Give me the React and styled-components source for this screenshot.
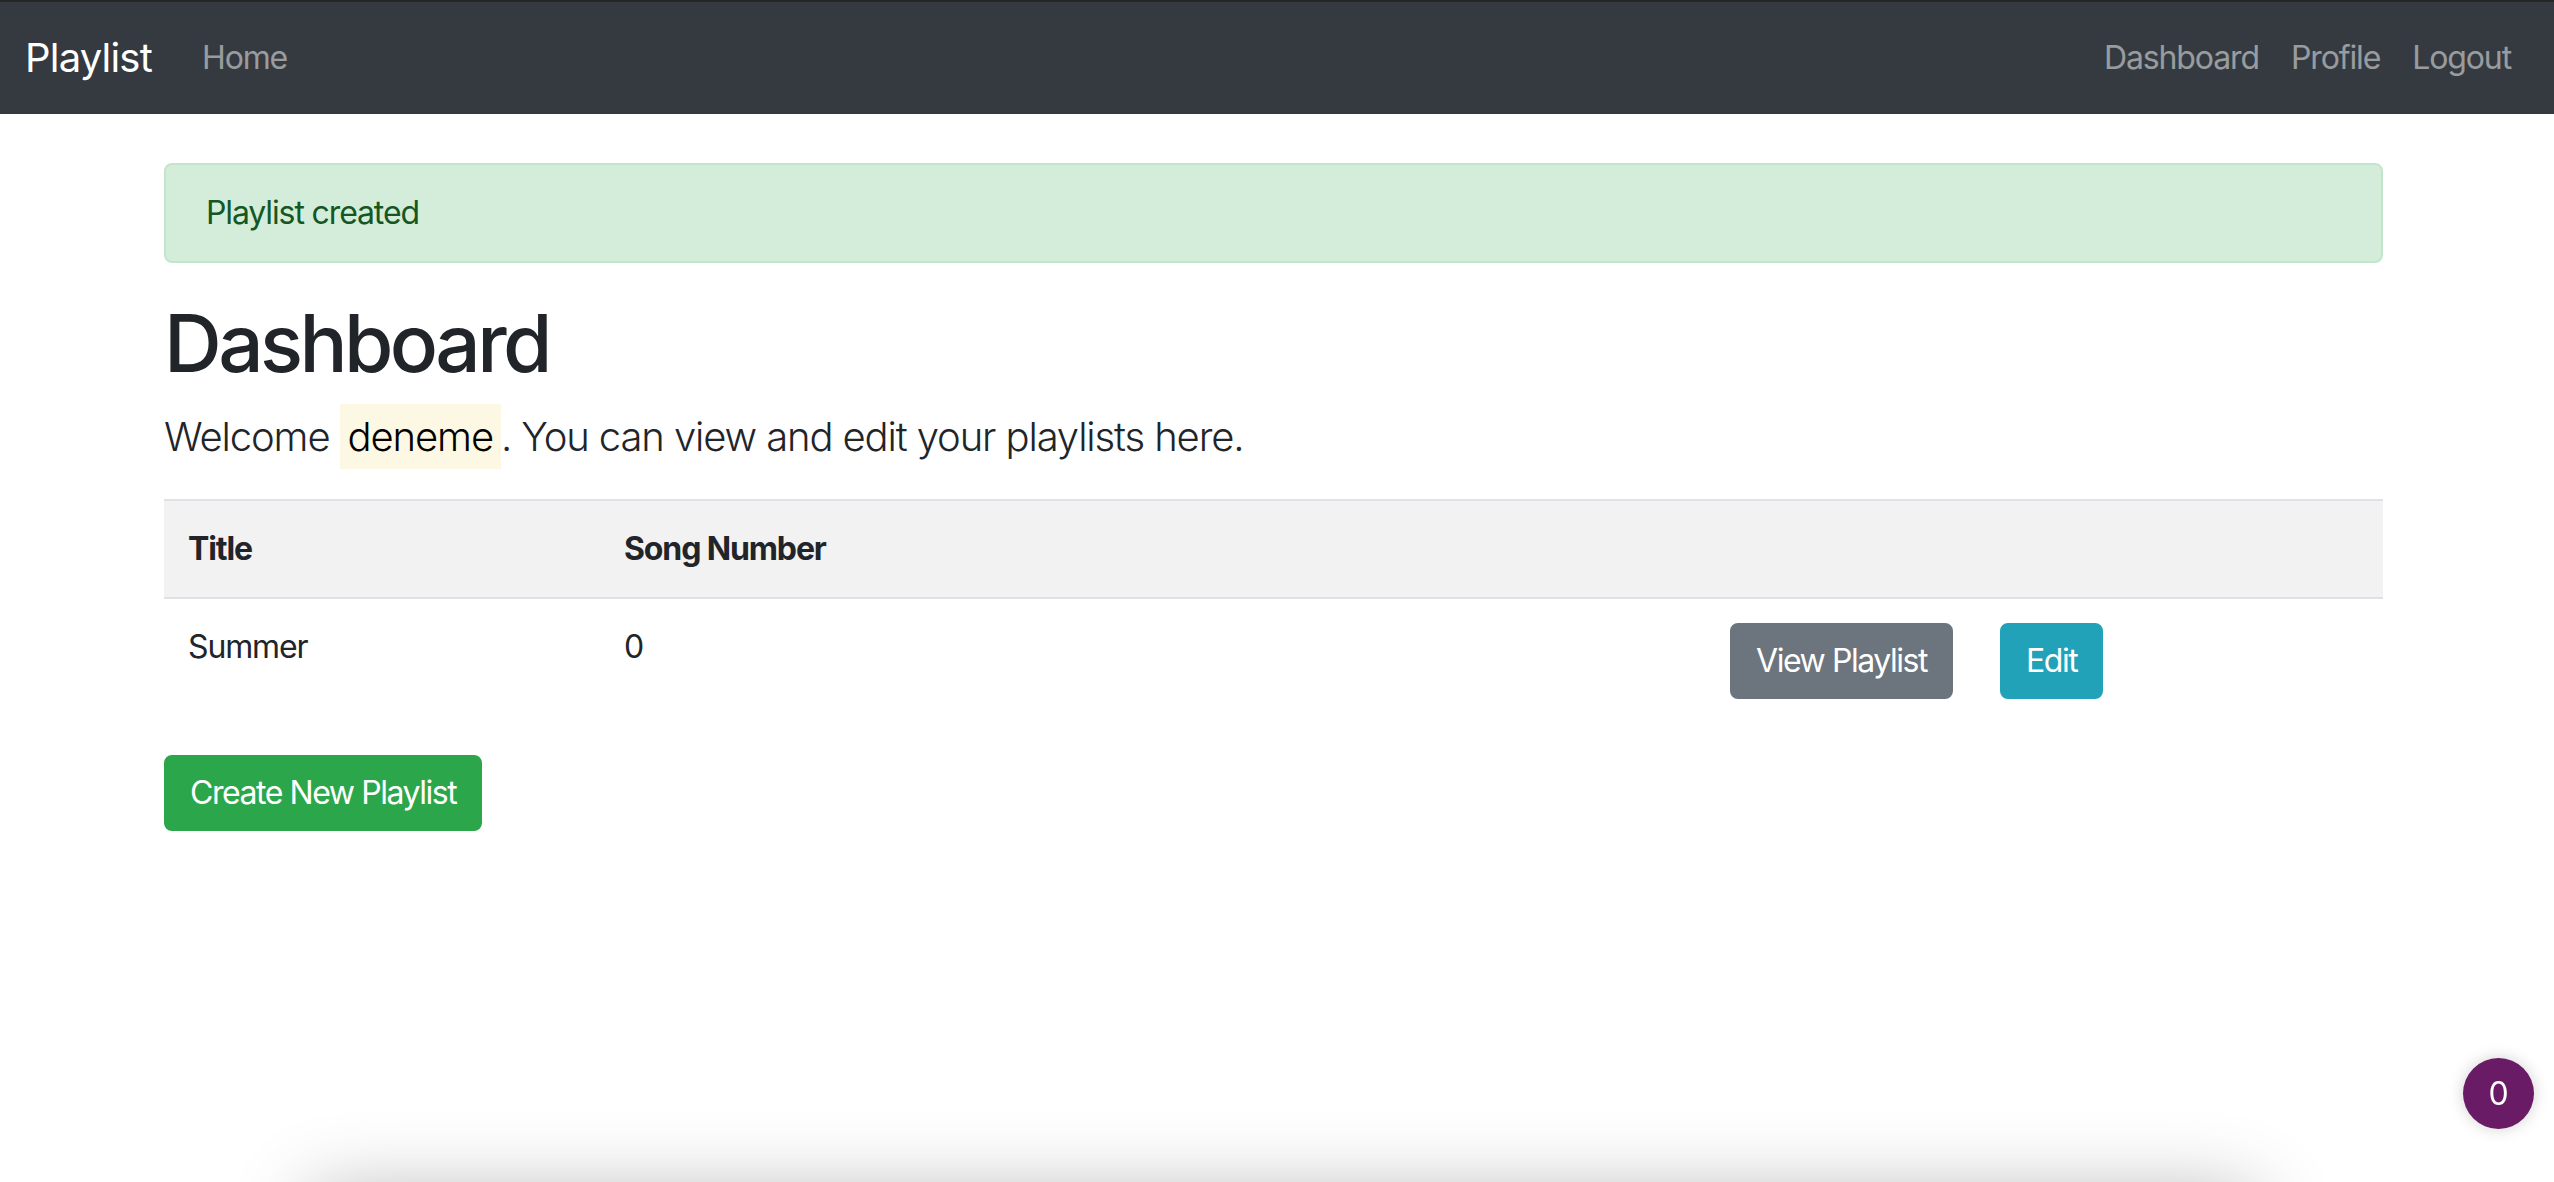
import React from 'react';
import styled, { createGlobalStyle, css } from 'styled-components';

const GlobalStyle = createGlobalStyle`
  html, body {
    margin: 0;
    padding: 0;
    background: #fff;
  }
  body {
    font-family: Inter, "Noto Sans", "Liberation Sans", sans-serif;
    font-size: 32px;
    line-height: 48px;
    letter-spacing: -0.035em;
    color: #212529;
  }
`;

const playlists = [
  { id: 1, title: 'Summer', songs: 0 },
];

const App = () => (
  <>
    <GlobalStyle />
    <Navbar>
      <Brand>Playlist</Brand>
      <NavList>
        <NavLink>Home</NavLink>
      </NavList>
      <NavList right>
        <NavLink>Dashboard</NavLink>
        <NavLink>Profile</NavLink>
        <NavLink>Logout</NavLink>
      </NavList>
    </Navbar>
    <Container>
      <Alert>Playlist created</Alert>
      <Heading>Dashboard</Heading>
      <Lead>
        Welcome <Mark>deneme</Mark>. You can view and edit your playlists here.
      </Lead>
      <Table>
        <colgroup>
          <col style={{ width: 436 }} />
          <col style={{ width: 1106 }} />
          <col style={{ width: 270 }} />
          <col />
        </colgroup>
        <tbody>
          <Row striped>
            <HeadCell>Title</HeadCell>
            <HeadCell>Song Number</HeadCell>
            <HeadCell />
            <HeadCell />
          </Row>
          {playlists.map((item) => (
            <Row key={item.id}>
              <Cell>{item.title}</Cell>
              <Cell>{item.songs}</Cell>
              <Cell><Button variant="secondary">View Playlist</Button></Cell>
              <Cell><Button variant="info">Edit</Button></Cell>
            </Row>
          ))}
        </tbody>
      </Table>
      <Button variant="success">Create New Playlist</Button>
    </Container>
    <BottomPanel />
    <CountBadge>0</CountBadge>
  </>
);

const Navbar = styled.nav`
  display: flex;
  align-items: center;
  height: 112px;
  padding: 0 25px;
  border-top: 2px solid #252525;
  background-color: #343a40;
`;

const Brand = styled.a`
  font-size: 40px;
  line-height: 60px;
  letter-spacing: -0.02em;
  color: #fff;
  margin-right: 34px;
  cursor: pointer;
`;

const NavList = styled.div`
  display: flex;
  ${(p) => p.right && css`
    margin-left: auto;
    margin-right: 2px;
  `}
`;

const NavLink = styled.a`
  padding: 0 16px;
  font-size: 32px;
  line-height: 48px;
  color: rgba(255, 255, 255, 0.5);
  cursor: pointer;
`;

const Container = styled.main`
  width: 2219px;
  margin-left: 164px;
  padding-top: 49px;
`;

const Alert = styled.div`
  padding: 24px 40px;
  margin-bottom: 32px;
  border: 2px solid #c3e6cb;
  border-radius: 8px;
  background-color: #d4edda;
  color: #155724;
`;

const Heading = styled.h1`
  margin: 0 0 16px;
  font-size: 80px;
  font-weight: 500;
  line-height: 96px;
  letter-spacing: -0.045em;
  color: #212529;
`;

const Lead = styled.p`
  margin: 0 0 32px;
  font-size: 40px;
  font-weight: 300;
  line-height: 60px;
`;

const Mark = styled.mark`
  padding: 8px;
  background-color: #fcf8e3;
  color: #000;
`;

const Table = styled.table`
  width: 100%;
  margin-bottom: 32px;
  border-collapse: collapse;
  table-layout: fixed;
`;

const Row = styled.tr`
  background-color: ${(p) => (p.striped ? '#f2f2f2' : 'transparent')};
`;

const cellStyle = css`
  padding: 24px;
  border-top: 2px solid #dee2e6;
  vertical-align: top;
  text-align: left;
  white-space: nowrap;
`;

const HeadCell = styled.th`
  ${cellStyle};
  font-weight: 700;
`;

const Cell = styled.td`
  ${cellStyle};
`;

const variants = {
  secondary: '#6c757d',
  info: '#21a2b8',
  success: '#2ca64a',
};

const Button = styled.button`
  display: inline-block;
  padding: 12px 24px;
  border: 2px solid ${(p) => variants[p.variant]};
  border-radius: 8px;
  background-color: ${(p) => variants[p.variant]};
  color: #fff;
  font-family: inherit;
  font-size: 32px;
  line-height: 48px;
  letter-spacing: -0.045em;
  white-space: nowrap;
  cursor: pointer;
`;

const BottomPanel = styled.div`
  position: fixed;
  left: 310px;
  right: 300px;
  top: 1195px;
  height: 200px;
  background: #fff;
  box-shadow: 0 0 80px rgba(0, 0, 0, 0.3);
`;

const CountBadge = styled.div`
  position: fixed;
  right: 20px;
  bottom: 53px;
  width: 71px;
  height: 71px;
  border-radius: 50%;
  background-color: #691c65;
  color: #fff;
  display: flex;
  align-items: center;
  justify-content: center;
  font-size: 32px;
  letter-spacing: 0;
  box-shadow: 0 0 16px rgba(0, 0, 0, 0.18);
`;

export default App;
